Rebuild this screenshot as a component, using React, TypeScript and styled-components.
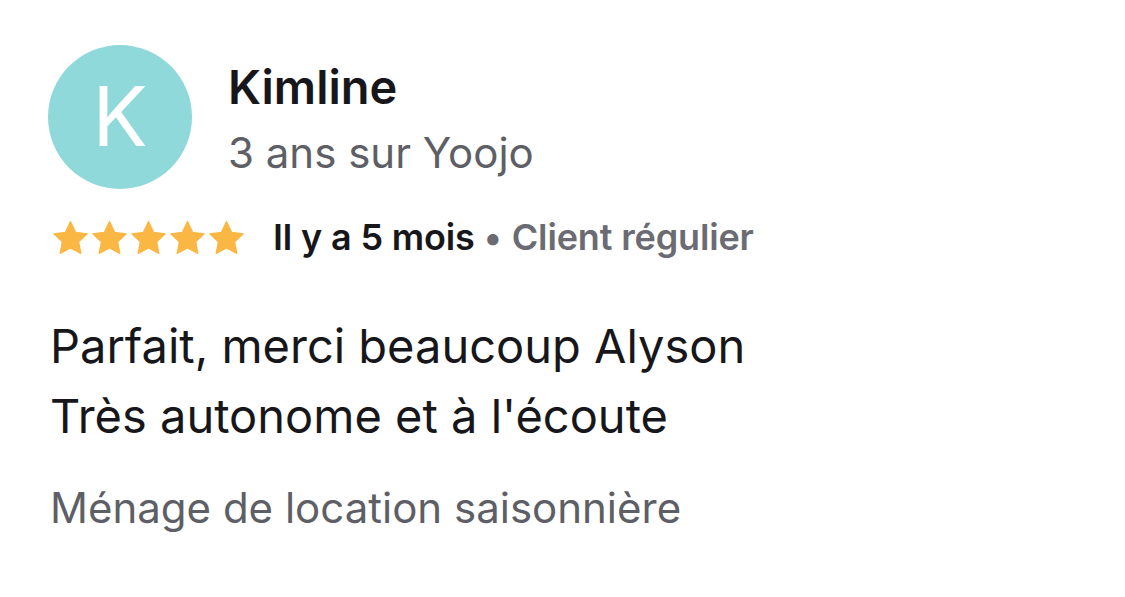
import React from "react";
import styled, { createGlobalStyle } from "styled-components";

const GlobalStyle = createGlobalStyle`
    html, body {
        margin: 0;
        padding: 0;
        background: #ffffff;
    }
    body {
        font-family: Inter, "Noto Sans", sans-serif;
        -webkit-font-smoothing: antialiased;
    }
`;

const ReviewCard = styled.article`
    width: 1125px;
    height: 597px;
    box-sizing: border-box;
    padding: 45px 48px 0;
    display: flex;
    flex-direction: column;
`;

const Header = styled.header`
    display: flex;
    align-items: flex-start;
    gap: 36px;
`;

const Avatar = styled.div<{ $color: string }>`
    width: 144px;
    height: 144px;
    border-radius: 50%;
    background: ${(p) => p.$color};
    color: #ffffff;
    display: flex;
    align-items: center;
    justify-content: center;
    font-size: 82px;
    font-weight: 400;
    line-height: 1;
    flex-shrink: 0;
`;

const UserInfo = styled.div`
    display: flex;
    flex-direction: column;
    gap: 8px;
    padding-top: 12px;
`;

const UserName = styled.h2`
    margin: 0;
    font-size: 47px;
    font-weight: 600;
    color: #17171b;
    line-height: 60px;
`;

const Seniority = styled.span`
    font-size: 42px;
    color: #5e5f66;
    line-height: 56px;
`;

const MetaRow = styled.div`
    display: flex;
    align-items: center;
    margin-top: 26px;
    gap: 29px;
    height: 44px;
`;

const Stars = styled.div`
    display: flex;
    gap: 4px;
    margin-left: 5px;
`;

const MetaText = styled.span`
    font-size: 36px;
    line-height: 44px;
    font-weight: 600;
    color: #17171b;
    letter-spacing: -0.15px;
`;

const MetaMuted = styled.span`
    color: #6a6b73;
`;

const Dot = styled.span`
    color: #6a6b73;
    margin: 0 10px 0 9px;
`;

const Comment = styled.p`
    margin: 52px 0 0 2px;
    font-size: 47px;
    line-height: 70px;
    color: #17171b;
    white-space: pre-line;
`;

const Service = styled.span`
    margin: 31px 0 0 2px;
    font-size: 42px;
    line-height: 52px;
    color: #5e5f66;
`;

const Star = () => (
    <svg width="35" height="33" viewBox="0.8 0.4 22.4 21.4">
        <path
            d="M12 0.8l3.3 6.9 7.5 1-5.5 5.2 1.4 7.5L12 17.8l-6.7 3.6 1.4-7.5L1.2 8.7l7.5-1z"
            fill="#fbb743"
            stroke="#fbb743"
            strokeWidth="0.8"
            strokeLinejoin="round"
        />
    </svg>
);

const review = {
    initial: "K",
    name: "Kimline",
    seniority: "3 ans sur Yoojo",
    rating: 5,
    date: "Il y a 5 mois",
    status: "Client régulier",
    comment: "Parfait, merci beaucoup Alyson\nTrès autonome et à l'écoute",
    service: "Ménage de location saisonnière",
};

const App = () => {
    return (
        <>
            <GlobalStyle />
            <ReviewCard>
                <Header>
                    <Avatar $color="#8fd9db">{review.initial}</Avatar>
                    <UserInfo>
                        <UserName>{review.name}</UserName>
                        <Seniority>{review.seniority}</Seniority>
                    </UserInfo>
                </Header>
                <MetaRow>
                    <Stars>
                        {Array.from({ length: review.rating }).map((_, i) => (
                            <Star key={i} />
                        ))}
                    </Stars>
                    <MetaText>
                        {review.date}
                        <Dot>•</Dot>
                        <MetaMuted>{review.status}</MetaMuted>
                    </MetaText>
                </MetaRow>
                <Comment>{review.comment}</Comment>
                <Service>{review.service}</Service>
            </ReviewCard>
        </>
    );
};

export default App;
